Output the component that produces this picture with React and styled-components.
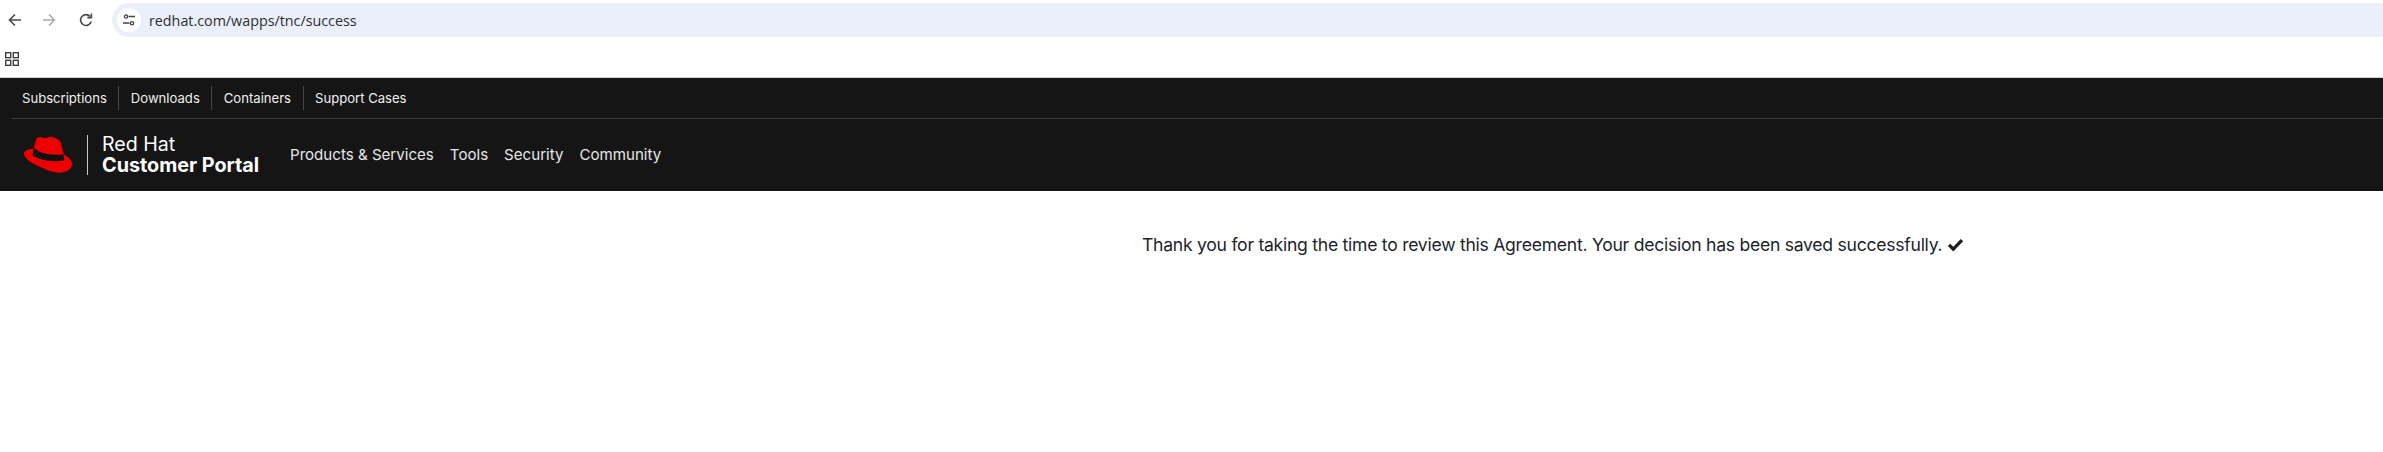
import React from "react";
import styled, { createGlobalStyle } from "styled-components";

const Global = createGlobalStyle`
  html, body { margin: 0; padding: 0; background: #fff; }
  body { font-family: "Inter", "Liberation Sans", sans-serif; overflow: hidden; }
`;
const Page = styled.div`width: 2383px; height: 452px; display: flex; flex-direction: column; background: #fff;`;
const BrowserBar = styled.div`height: 40px; padding: 3px 0 3px 5px; box-sizing: border-box; display: flex; align-items: center;`;
const NavButton = styled.span`
  width: 20px; height: 20px; display: flex; align-items: center; justify-content: center;
  margin-right: ${p => p.$gap}px; color: ${p => p.$dim ? "#a9abaf" : "#474a4f"};
`;
const Omnibox = styled.div`
  flex: 1; height: 34px; background: #ebeff9; border-radius: 17px 0 0 17px;
  display: flex; align-items: center; padding-left: 5px;
`;
const TuneChip = styled.span`
  width: 24px; height: 24px; border-radius: 50%; background: #fff; display: flex;
  align-items: center; justify-content: center; margin-right: 8px; color: #3f4246;
`;
const Url = styled.span`font: 400 14.3px "Open Sans", "Liberation Sans", sans-serif; color: #2b2e33;`;
const BookmarkBar = styled.div`height: 37px; padding: 10px 0 0 5px; box-sizing: border-box;`;
const Header = styled.header`background: #151515; height: 113px; border-top: 1px solid #d4d4d4;`;
const UtilityRow = styled.nav`
  margin-left: 12px; height: 40px; border-bottom: 1px solid #3f3f3f; display: flex; align-items: center;
`;
const UtilityLink = styled.a`
  font-size: 13.1px; color: #f0f0f0; height: 24px; display: flex; align-items: center; padding: 0 11.5px 0 ${p => p.$first ? 10 : 11.5}px;
  border-left: ${p => p.$first ? "none" : "1px solid #474747"};
`;
const MainRow = styled.div`height: 72px; display: flex; align-items: center; padding-left: 24px;`;
const Hat = styled.svg`width: 48px; height: 37px; display: block; margin-top: -2px;`;
const Rule = styled.span`width: 1px; height: 40px; background: #c9c9c9; margin: -1px 14px 0 15px;`;
const Brand = styled.div`display: flex; flex-direction: column; color: #fff; width: 188px; margin-top: -1px;`;
const BrandTop = styled.span`font-size: 19.6px; line-height: 21px; font-weight: 400;`;
const BrandBottom = styled.span`font-size: 19.8px; line-height: 21px; font-weight: 700;`;
const MainNav = styled.nav`display: flex; gap: 16px; margin-top: -1px;`;
const MainLink = styled.a`font-size: 15.1px; color: #e6e6e6; font-weight: 400;`;
const Body = styled.main`flex: 1; padding: 41px 0 0 1142px;`;
const Message = styled.p`margin: 0; font-size: 17.6px; letter-spacing: -0.27px; line-height: 26px; color: #1d1f2b; display: flex; align-items: center; white-space: nowrap;`;
const Check = styled.svg`width: 17px; height: 14px; margin-left: 5px; color: #1f1f1f;`;

const Back = () => <svg width="16" height="16" viewBox="0 0 16 16" fill="none" stroke="currentColor" strokeWidth="1.6"><path d="M14 8H2.5M8 2.5 2.5 8 8 13.5" /></svg>;
const Fwd = () => <svg width="16" height="16" viewBox="0 0 16 16" fill="none" stroke="currentColor" strokeWidth="1.6"><path d="M2 8h11.5M8 2.5 13.5 8 8 13.5" /></svg>;
const Reload = () => <svg width="16" height="16" viewBox="0 0 16 16" fill="none" stroke="currentColor" strokeWidth="1.6"><path d="M13.2 9.5A5.4 5.4 0 1 1 12 4.4" /><path d="M13.4 1.6v4h-4" /></svg>;
const Tune = () => <svg width="14" height="14" viewBox="0 0 14 14" fill="none" stroke="currentColor" strokeWidth="1.3"><circle cx="4" cy="3.5" r="1.6" /><path d="M6.5 3.5H13M1 10h6.5" /><circle cx="10" cy="10.2" r="1.6" /></svg>;
const Apps = () => <svg width="14" height="14" viewBox="0 0 14 14" fill="none" stroke="#3c4043" strokeWidth="1.4"><rect x=".7" y=".7" width="5" height="5" /><rect x="8.3" y=".7" width="5" height="5" /><rect x=".7" y="8.3" width="5" height="5" /><rect x="8.3" y="8.3" width="5" height="5" /></svg>;

export default function App() {
  return (
    <Page>
      <Global />
      <BrowserBar>
        <NavButton $gap={14}><Back /></NavButton>
        <NavButton $gap={17} $dim><Fwd /></NavButton>
        <NavButton $gap={16}><Reload /></NavButton>
        <Omnibox>
          <TuneChip><Tune /></TuneChip>
          <Url>redhat.com/wapps/tnc/success</Url>
        </Omnibox>
      </BrowserBar>
      <BookmarkBar><Apps /></BookmarkBar>
      <Header>
        <UtilityRow>
          <UtilityLink $first>Subscriptions</UtilityLink>
          <UtilityLink>Downloads</UtilityLink>
          <UtilityLink>Containers</UtilityLink>
          <UtilityLink>Support Cases</UtilityLink>
        </UtilityRow>
        <MainRow>
          <Hat viewBox="72 50 144 110">
            <path fill="#ee0000" d="M100 88 108 62C110 54 118 51 126 54 134 57 140 56 148 52 158 50 176 58 182 68L192 106C205 112 216 122 216 134 216 146 205 156 186 159 170 161 150 156 130 146 110 138 78 124 72 106 70 96 80 90 100 88Z" />
            <path fill="#111" d="M101 84C115 100 150 110 190 104L193 122C160 130 120 122 98 108Z" />
          </Hat>
          <Rule />
          <Brand>
            <BrandTop>Red Hat</BrandTop>
            <BrandBottom>Customer Portal</BrandBottom>
          </Brand>
          <MainNav>
            <MainLink>Products &amp; Services</MainLink>
            <MainLink>Tools</MainLink>
            <MainLink>Security</MainLink>
            <MainLink>Community</MainLink>
          </MainNav>
        </MainRow>
      </Header>
      <Body>
        <Message>
          Thank you for taking the time to review this Agreement. Your decision has been saved successfully.
          <Check viewBox="0 0 16 14"><path fill="currentColor" d="M5.8 13.4.4 8l2.3-2.3 3.1 3.1L13.3.9 15.6 3.2z" /></Check>
        </Message>
      </Body>
    </Page>
  );
}
